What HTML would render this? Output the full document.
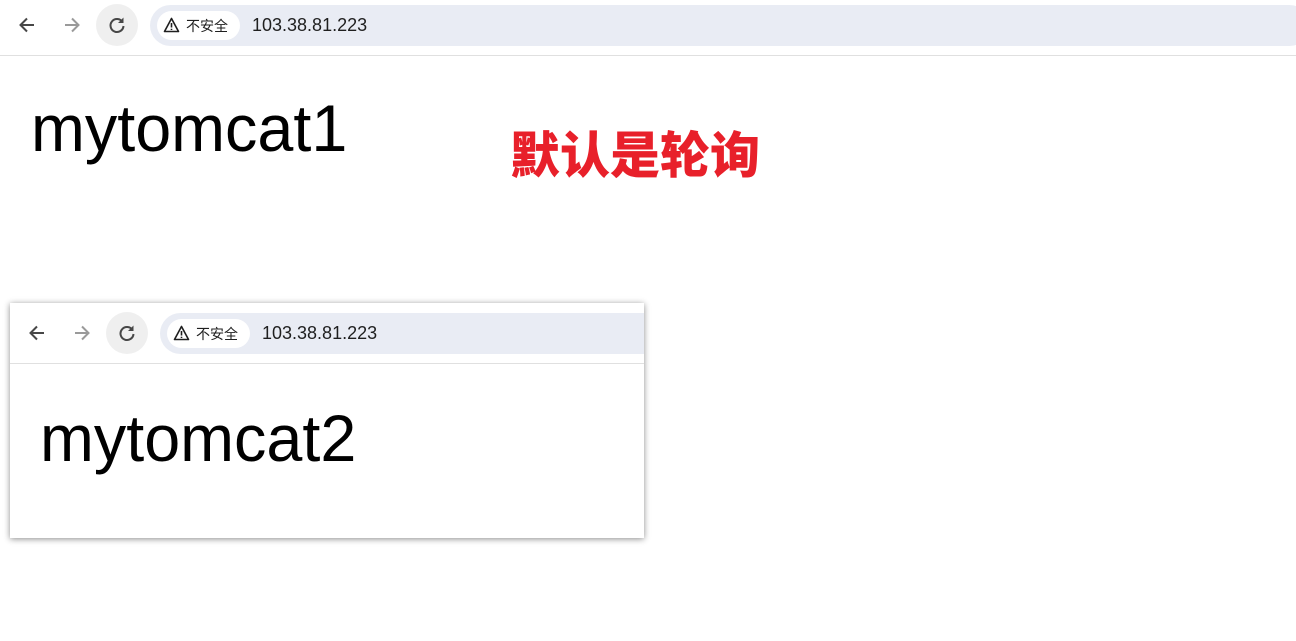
<!DOCTYPE html>
<html><head><meta charset="utf-8"><style>
*{margin:0;padding:0;box-sizing:border-box}
body{width:1296px;height:641px;background:#fff;position:relative;overflow:hidden;font-family:"Liberation Sans","Noto Sans CJK SC",sans-serif}
.bar{position:absolute;left:0;top:0;width:1296px;height:56px;border-bottom:1px solid #e0e0e0;background:#fff}
.ic{position:absolute}
.reload{position:absolute;width:42px;height:42px;border-radius:50%;background:#efefef}
.addr{position:absolute;height:41px;border-radius:21px;background:#e9ecf4}
.chip{position:absolute;left:7px;top:6px;height:29px;width:83px;border-radius:15px;background:#fff;font-size:14px;color:#1f1f1f}
.chip span{position:absolute;left:29px;top:5px}
.url{position:absolute;left:102px;top:10px;font-size:18px;color:#1f1f1f}
.big{position:absolute;font-size:66px;line-height:66px;color:#000;transform:scaleX(0.98);transform-origin:0 0;white-space:nowrap}
.red{position:absolute;left:510px;top:127px;font-size:50px;line-height:50px;font-weight:900;color:#e8202a;font-family:"Noto Sans CJK SC",sans-serif}
.win{position:absolute;left:10px;top:303px;width:634px;height:235px;background:#fff;box-shadow:0 1px 6px rgba(0,0,0,.45);overflow:hidden}
.win .bar{width:634px;height:61px;top:0}
</style></head><body>
<div class="bar">
 <svg class="ic" style="left:17px;top:15px" width="20" height="20" viewBox="0 0 20 20"><path d="M17 10H4M10 3.5L3.5 10L10 16.5" fill="none" stroke="#474747" stroke-width="2"/></svg>
 <svg class="ic" style="left:62px;top:15px" width="20" height="20" viewBox="0 0 20 20"><path d="M3 10H16M10 3.5L16.5 10L10 16.5" fill="none" stroke="#9a9a9a" stroke-width="2"/></svg>
 <div class="reload" style="left:96px;top:4px"></div>
 <svg class="ic" style="left:107px;top:15px" width="20" height="20" viewBox="0 0 20 20"><path d="M15.5 7A6.5 6.5 0 1 0 16.5 11" fill="none" stroke="#474747" stroke-width="2"/><path d="M16.5 2.5V8H11Z" fill="#474747"/></svg>
 <div class="addr" style="left:150px;top:5px;width:1160px">
  <div class="chip"><svg style="position:absolute;left:6px;top:6px" width="17" height="16" viewBox="0 0 17 16"><path d="M8.5 1.5L15.5 14.5H1.5Z" fill="none" stroke="#1f1f1f" stroke-width="1.6" stroke-linejoin="round"/><path d="M8.5 6V10.5M8.5 11.8V13" stroke="#1f1f1f" stroke-width="1.6"/></svg><span>不安全</span></div>
  <div class="url">103.38.81.223</div>
 </div>
</div>
<div class="big" style="left:31px;top:95px">mytomcat1</div>
<div class="red">默认是轮询</div>
<div class="win">
 <div class="bar">
  <svg class="ic" style="left:17px;top:20px" width="20" height="20" viewBox="0 0 20 20"><path d="M17 10H4M10 3.5L3.5 10L10 16.5" fill="none" stroke="#474747" stroke-width="2"/></svg>
  <svg class="ic" style="left:62px;top:20px" width="20" height="20" viewBox="0 0 20 20"><path d="M3 10H16M10 3.5L16.5 10L10 16.5" fill="none" stroke="#9a9a9a" stroke-width="2"/></svg>
  <div class="reload" style="left:96px;top:9px"></div>
  <svg class="ic" style="left:107px;top:20px" width="20" height="20" viewBox="0 0 20 20"><path d="M15.5 7A6.5 6.5 0 1 0 16.5 11" fill="none" stroke="#474747" stroke-width="2"/><path d="M16.5 2.5V8H11Z" fill="#474747"/></svg>
  <div class="addr" style="left:150px;top:10px;width:520px">
   <div class="chip"><svg style="position:absolute;left:6px;top:6px" width="17" height="16" viewBox="0 0 17 16"><path d="M8.5 1.5L15.5 14.5H1.5Z" fill="none" stroke="#1f1f1f" stroke-width="1.6" stroke-linejoin="round"/><path d="M8.5 6V10.5M8.5 11.8V13" stroke="#1f1f1f" stroke-width="1.6"/></svg><span>不安全</span></div>
   <div class="url">103.38.81.223</div>
  </div>
 </div>
 <div class="big" style="left:30px;top:102px">mytomcat2</div>
</div>
</body></html>
